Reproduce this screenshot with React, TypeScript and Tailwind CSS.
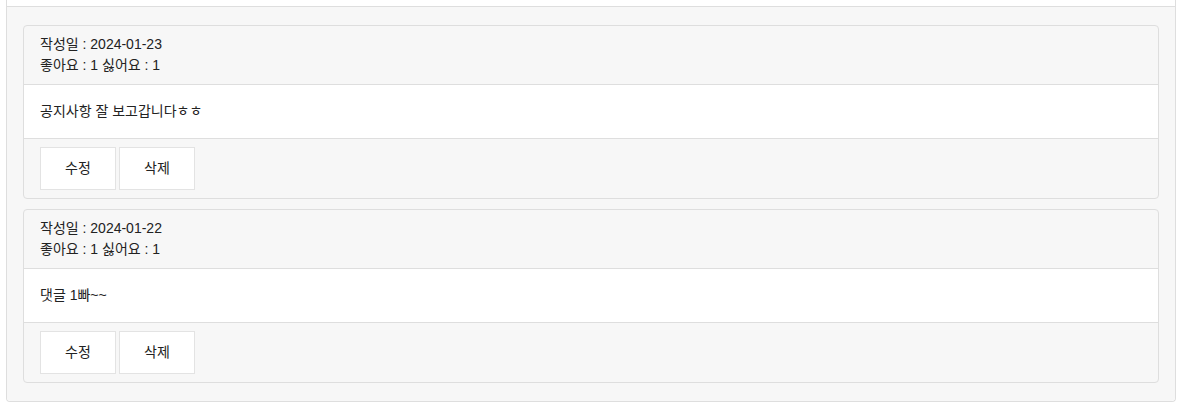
import React from 'react';

const comments = [
  { date: '2024-01-23', like: 1, dislike: 1, text: '공지사항 잘 보고갑니다ㅎㅎ' },
  { date: '2024-01-22', like: 1, dislike: 1, text: '댓글 1빠~~' },
];

const CommentCard = ({ date, like, dislike, text }: (typeof comments)[number]) => {
  return (
    <div className="border border-[#dedede] rounded-[4px] bg-[#f7f7f7] overflow-hidden">
      <div className="px-4 py-2 leading-[21px] border-b border-[#dedede]">
        <div>작성일 : {date}</div>
        <div>
          좋아요 : {like} 싫어요 : {dislike}
        </div>
      </div>
      <div className="bg-white px-4 py-4 leading-[21px] border-b border-[#dedede]">{text}</div>
      <div className="flex gap-[3px] px-4 py-2">
        <button className="w-[76px] h-[43px] bg-white border border-[#e3e3e3]">수정</button>
        <button className="w-[76px] h-[43px] bg-white border border-[#e3e3e3]">삭제</button>
      </div>
    </div>
  );
};

const App = () => {
  return (
    <div
      className="w-[1185px] h-[408px] bg-white text-[14px] text-[#222]"
      style={{ fontFamily: '"Liberation Sans", "Noto Sans CJK KR", sans-serif' }}
    >
      <div className="mx-[6px] w-[1170px] border-x border-b border-[#dedede] rounded-b-[4px]">
        <div className="h-[7px] bg-white border-b border-[#dedede]" />
        <div className="bg-[#f7f7f7] px-4 pt-[18px] pb-[18px] flex flex-col gap-[10px] rounded-b-[4px]">
          {comments.map((c) => (
            <CommentCard key={c.date} {...c} />
          ))}
        </div>
      </div>
    </div>
  );
};

export default App;
